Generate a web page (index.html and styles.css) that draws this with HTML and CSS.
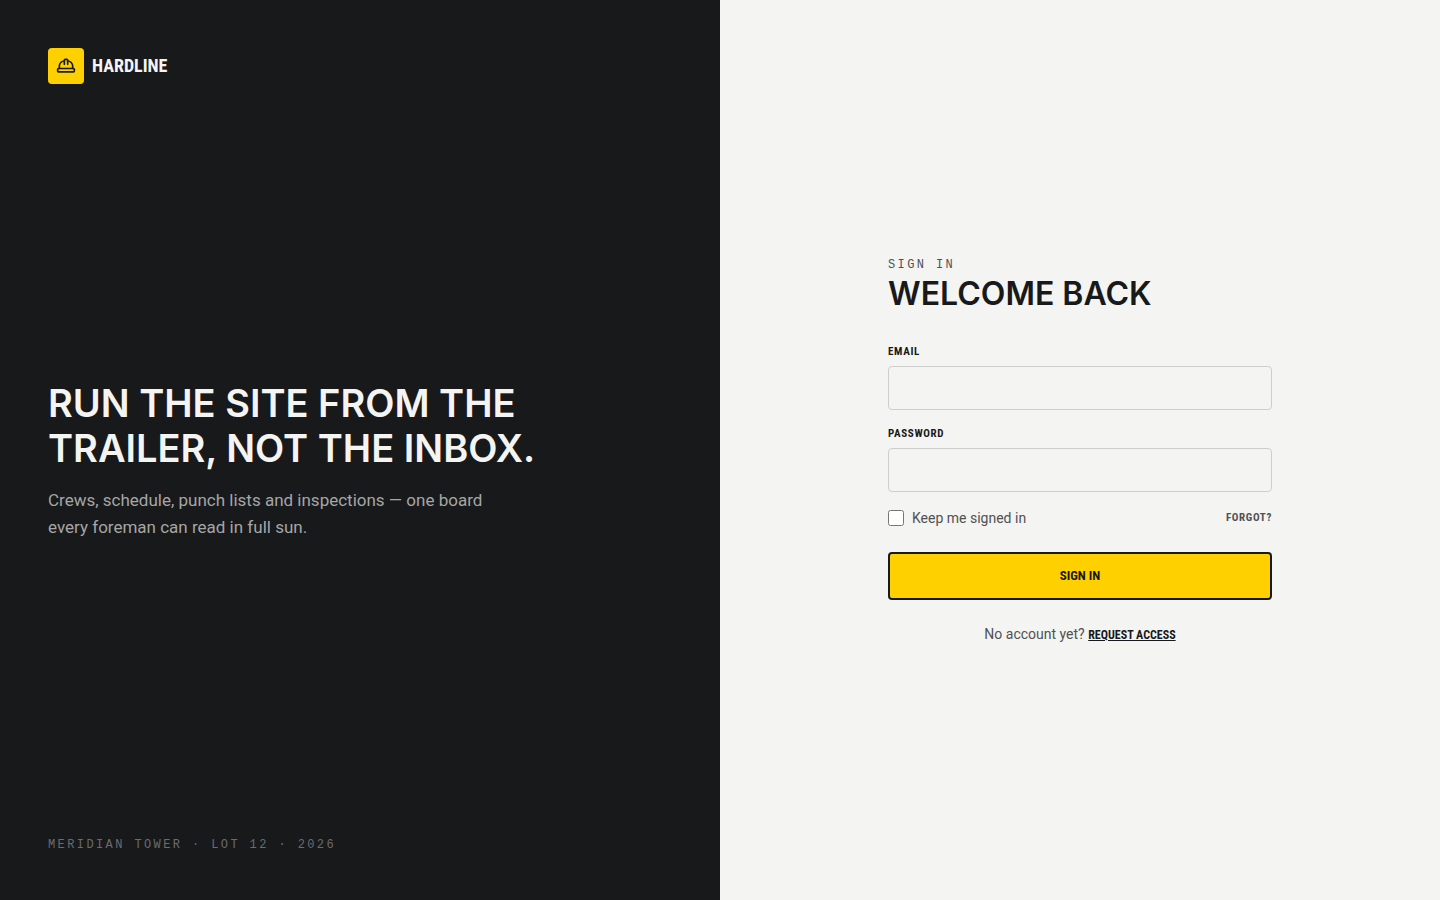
FILE: index.html
```html
<!DOCTYPE html>
<html lang="en">
<head>
<meta charset="utf-8">
<meta name="viewport" content="width=device-width, initial-scale=1">
<title>Hardline – Sign in</title>
<link rel="stylesheet" href="styles.css">
</head>
<body>
<div class="layout">
  <aside class="brand-panel">
    <div class="brand">
      <span class="brand-mark">
        <svg class="brand-icon" viewBox="0 0 24 24" aria-hidden="true">
          <path d="M10 10V5a1 1 0 0 1 1-1h2a1 1 0 0 1 1 1v5"/>
          <path d="M14 6a6 6 0 0 1 6 6v3"/>
          <path d="M4 15v-3a6 6 0 0 1 6-6"/>
          <rect x="2" y="15" width="20" height="4" rx="1"/>
        </svg>
      </span>
      <span class="brand-name">HARDLINE</span>
    </div>
    <div class="pitch">
      <h2 class="pitch-title">RUN THE SITE FROM THE<br>TRAILER, NOT THE INBOX.</h2>
      <p class="pitch-text">Crews, schedule, punch lists and inspections — one board<br>every foreman can read in full sun.</p>
    </div>
    <p class="site-note">MERIDIAN TOWER · LOT 12 · 2026</p>
  </aside>
  <main class="form-panel">
    <form class="sign-in">
      <header class="form-header">
        <p class="eyebrow">SIGN IN</p>
        <h1 class="form-title">WELCOME BACK</h1>
      </header>
      <div class="field">
        <label class="field-label" for="email">EMAIL</label>
        <input class="field-input" id="email" type="email" autocomplete="email">
      </div>
      <div class="field">
        <label class="field-label" for="password">PASSWORD</label>
        <input class="field-input" id="password" type="password" autocomplete="current-password">
      </div>
      <div class="options">
        <label class="keep" for="keep"><input class="keep-box" id="keep" type="checkbox">Keep me signed in</label>
        <a class="forgot" href="#forgot">FORGOT?</a>
      </div>
      <button class="submit" type="submit">SIGN IN</button>
      <p class="signup">No account yet? <a class="signup-link" href="#request">REQUEST ACCESS</a></p>
    </form>
  </main>
</div>
</body>
</html>
```
FILE: styles.css
```css
* { box-sizing: border-box; }
body, h1, h2, p { margin: 0; }
body {
  font-family: Roboto, "Liberation Sans", sans-serif;
  color: #18191b;
  background: #f4f4f2;
}
.layout {
  display: grid;
  grid-template-columns: 1fr 1fr;
  min-height: 100vh;
}
.brand-panel {
  display: flex;
  flex-direction: column;
  justify-content: space-between;
  padding: 48px;
  background: #18191b;
  color: #f4f4f2;
}
.brand { display: flex; align-items: center; gap: 8px; }
.brand-mark {
  display: grid;
  place-items: center;
  width: 36px;
  height: 36px;
  border-radius: 4px;
  background: #ffd000;
  color: #18191b;
}
.brand-icon {
  width: 20px;
  height: 20px;
  fill: none;
  stroke: currentColor;
  stroke-width: 2;
  stroke-linecap: round;
  stroke-linejoin: round;
}
.brand-name, .field-label, .forgot, .submit, .signup-link {
  font-family: "Liberation Sans Narrow", "Roboto Condensed", Roboto, sans-serif;
  font-weight: 700;
}
.brand-name { font-size: 18px; line-height: 28px; }
.pitch { display: flex; flex-direction: column; gap: 16px; }
.pitch-title, .form-title {
  font-family: Inter, "Liberation Sans", sans-serif;
  font-weight: 600;
}
.pitch-title { font-size: 38px; line-height: 45px; }
.pitch-text { font-size: 17px; line-height: 27px; color: #a5a6a6; }
.site-note, .eyebrow {
  font-family: "Liberation Mono", monospace;
  font-size: 12px;
  letter-spacing: 0.2em;
}
.site-note { line-height: 14px; color: #6b6c6d; }
.form-panel {
  display: flex;
  align-items: center;
  justify-content: center;
  padding: 48px;
}
.sign-in {
  display: flex;
  flex-direction: column;
  width: 100%;
  max-width: 384px;
}
.form-header { margin-bottom: 30px; }
.eyebrow { line-height: 18px; color: #505153; }
.form-title { font-size: 32px; line-height: 40px; }
.field {
  display: flex;
  flex-direction: column;
  gap: 6px;
  margin-bottom: 16px;
}
.field-label { font-size: 11px; line-height: 16px; letter-spacing: 0.06em; }
.field-input {
  width: 100%;
  height: 44px;
  padding: 0 12px;
  border: 1px solid #cececd;
  border-radius: 4px;
  background: transparent;
  font: inherit;
  color: inherit;
}
.options {
  display: flex;
  align-items: center;
  justify-content: space-between;
  margin-bottom: 24px;
}
.keep {
  display: flex;
  align-items: center;
  gap: 8px;
  font-size: 14px;
  line-height: 20px;
  color: #505153;
}
.keep-box { width: 16px; height: 16px; margin: 0; }
.forgot {
  font-size: 11px;
  line-height: 16px;
  letter-spacing: 0.06em;
  color: #505153;
  text-decoration: none;
}
.submit {
  height: 48px;
  border: 2px solid #18191b;
  border-radius: 4px;
  background: #ffd000;
  color: #18191b;
  font-size: 13px;
}
.signup {
  margin-top: 24px;
  font-size: 14px;
  line-height: 20px;
  color: #505153;
  text-align: center;
}
.signup-link { font-size: 12px; color: #18191b; text-decoration: underline; }
@media (max-width: 800px) {
  .layout { grid-template-columns: 1fr; }
  .brand-panel { gap: 48px; }
}
```
